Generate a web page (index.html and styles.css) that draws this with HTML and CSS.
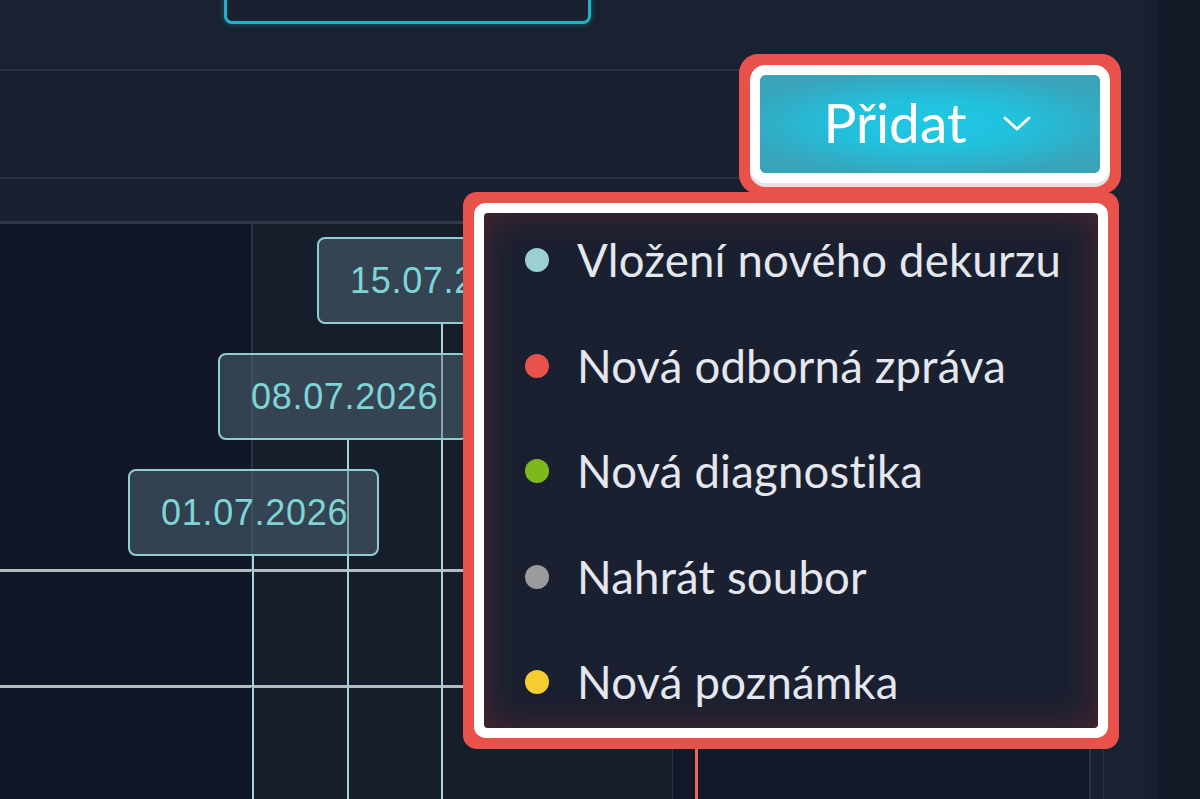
FILE: index.html
```html
<!DOCTYPE html>
<html lang="cs">
<head>
<meta charset="utf-8">
<title>Přidat</title>
<link rel="stylesheet" href="styles.css">
</head>
<body>
<div class="app">
  <main class="main">
    <header class="topbar">
      <div class="focus-card"></div>
    </header>
    <div class="toolbar">
      <button class="add-btn" type="button">
        <span class="add-label">Přidat</span>
        <svg class="chev" width="28" height="15" viewBox="0 0 28 15" aria-hidden="true"><path d="M2 2 L14 13 L26 2" fill="none" stroke="#ffffff" stroke-width="3" stroke-linecap="round" stroke-linejoin="round"/></svg>
      </button>
    </div>
    <div class="band"></div>
    <section class="chart">
      <div class="cell side r1"></div>
      <div class="cell line r1"></div>
      <div class="cell other r1"></div>
      <div class="cell side r2 sep"></div>
      <div class="cell line r2 sep"></div>
      <div class="cell other r2"></div>
      <div class="cell side r3 sep"></div>
      <div class="cell line r3 sep"></div>
      <div class="cell other r3 last"><div class="other-inner"></div></div>

      <div class="timeline">
        <div class="stem s3"></div>
        <div class="stem s2"></div>
        <div class="stem s1"></div>
        <div class="node n3">15.07.2026</div>
        <div class="node n2">08.07.2026</div>
        <div class="node n1">01.07.2026</div>
      </div>
    </section>

    <ul class="menu">
      <li class="item"><span class="dot teal"></span>Vložení nového dekurzu</li>
      <li class="item"><span class="dot red"></span>Nová odborná zpráva</li>
      <li class="item"><span class="dot green"></span>Nová diagnostika</li>
      <li class="item"><span class="dot gray"></span>Nahrát soubor</li>
      <li class="item"><span class="dot yellow"></span>Nová poznámka</li>
    </ul>
    <div class="pointer"></div>
  </main>
  <div class="gutter"></div>
  <aside class="rail"></aside>
</div>
</body>
</html>
```

FILE: styles.css
```css
* { box-sizing: border-box; }

html, body {
  margin: 0;
  padding: 0;
  width: 1200px;
  height: 799px;
  overflow: hidden;
  background: #1a2030;
  font-family: Lato, "Noto Sans", sans-serif;
}

.app {
  display: grid;
  grid-template-columns: 1104px 54px 42px;
  height: 799px;
}

.main {
  position: relative;
  display: flex;
  flex-direction: column;
  background: #1a2030;
  min-height: 0;
}

.gutter {
  background: linear-gradient(90deg, #1a2131 0%, #1b2232 60%, #182030 100%);
}

.rail {
  background: linear-gradient(90deg, #141a28 0%, #121826 100%);
}

/* top bar */
.topbar {
  height: 71px;
  flex: none;
  padding-left: 224px;
  border-bottom: 2px solid #2a3240;
  background: #1a2130;
}

.focus-card {
  width: 367px;
  height: 40px;
  margin-top: -16px;
  border: 3px solid #1db3c7;
  border-radius: 8px;
  background: #1a2030;
  box-shadow: 0 0 6px rgba(29, 179, 199, 0.45);
}

/* toolbar */
.toolbar {
  height: 108px;
  flex: none;
  display: flex;
  justify-content: flex-end;
  align-items: center;
  padding-right: 4px;
  border-bottom: 2px solid #2a3240;
  background: #1a2030;
}

.add-btn {
  width: 340px;
  height: 98px;
  display: flex;
  align-items: center;
  justify-content: center;
  gap: 36px;
  padding: 0 6px 4px 0;
  border: 0;
  border-radius: 6px;
  color: #ffffff;
  font-family: Lato, "Noto Sans", sans-serif;
  font-size: 55px;
  font-weight: 400;
  background: radial-gradient(ellipse 60% 55% at 50% 50%, #1fc8e4 0%, #22c0dd 45%, #39a3b9 100%);
  box-shadow: 0 0 0 10px #ffffff, 0 4px 0 10px #e6e0e0, 0 0 0 21px #e8524a;
  position: relative;
  z-index: 3;
}

.add-label { line-height: 1; }
.chev { display: block; margin-top: 2px; }

.band {
  height: 45px;
  flex: none;
  border-bottom: 3px solid #2e3745;
  background: #1a2030;
}

/* chart */
.chart {
  flex: 1;
  position: relative;
  display: grid;
  grid-template-columns: 253px 419px 1fr;
  grid-template-rows: 345px 116px 1fr;
}

.cell.side { background: #111726; border-right: 2px solid #2b3442; }
.cell.line { background: #161d2b; }
.cell.other { background: linear-gradient(90deg, #1a2232 0%, #1a2030 100%); border-left: 1px solid #2a3342; }
.cell.other.last { border-right: 1px solid #2a3342; }
.cell.sep { border-top: 3px solid #b3bbc1; }
.cell.side.sep { border-right-color: transparent; }
.other-inner {
  width: 418px;
  height: 100%;
  background: #121827;
  border-right: 2px solid #2a3342;
}

.timeline {
  position: absolute;
  inset: 0;
  pointer-events: none;
}

.stem {
  position: absolute;
  width: 2px;
  bottom: 0;
  background: #a6d3d6;
}
.stem.s1 { left: 252px; top: 331px; }
.stem.s2 { left: 347px; top: 215px; }
.stem.s3 { left: 441px; top: 100px; }

.node {
  position: absolute;
  width: 251px;
  height: 87px;
  padding-left: 31px;
  display: flex;
  align-items: center;
  border: 2px solid #8fcdd0;
  border-radius: 8px;
  background: rgba(88, 118, 130, 0.45);
  color: #7fd4d6;
  font-family: "Liberation Sans", Arial, sans-serif;
  font-size: 36px;
  letter-spacing: 0.7px;
}
.node.n1 { left: 128px; top: 245px; }
.node.n2 { left: 218px; top: 129px; }
.node.n3 { left: 317px; top: 13px; }

/* dropdown */
.menu {
  position: absolute;
  left: 484px;
  top: 213px;
  width: 614px;
  height: 515px;
  margin: 0;
  padding: 26px 10px 25px 41px;
  list-style: none;
  display: flex;
  flex-direction: column;
  justify-content: space-between;
  background: #1a2030;
  border-radius: 4px;
  box-shadow:
    inset 0 0 34px rgba(120, 42, 48, 0.55),
    0 0 0 10px #ffffff,
    0 0 0 21px #e8524a;
  z-index: 2;
}

.item {
  height: 42px;
  display: flex;
  align-items: center;
  gap: 28px;
  color: #e4e7ee;
  font-size: 45.5px;
  letter-spacing: 0.2px;
  line-height: 42px;
  white-space: nowrap;
}

.dot {
  width: 24px;
  height: 24px;
  border-radius: 50%;
  flex: none;
}
.dot.teal { background: #9ccfd2; }
.dot.red { background: #e8524a; }
.dot.green { background: #7db91c; }
.dot.gray { background: #9a9b9d; }
.dot.yellow { background: #f6cd30; }

.pointer {
  position: absolute;
  left: 695px;
  top: 748px;
  bottom: 0;
  width: 3px;
  background: #e8675c;
  z-index: 1;
}
```
